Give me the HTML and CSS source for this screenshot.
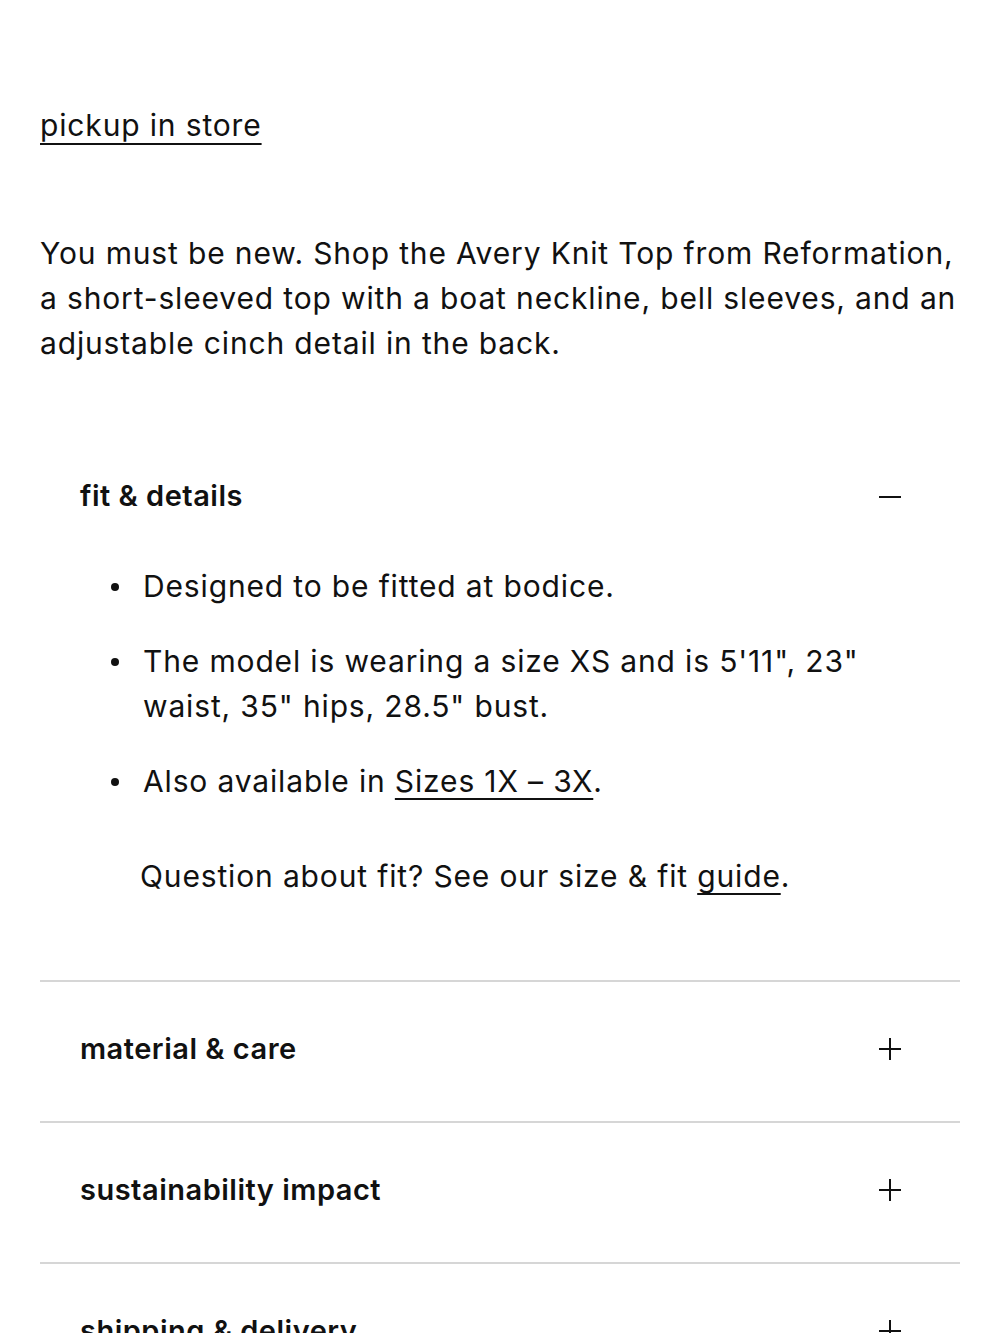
FILE: index.html
```html
<!DOCTYPE html>
<html lang="en">
<head>
<meta charset="utf-8">
<title>Avery Knit Top</title>
<link rel="stylesheet" href="styles.css">
</head>
<body>
<main class="page">
  <a class="pickup" href="#">pickup in store</a>
  <p class="description">You must be new. Shop the Avery Knit Top from Reformation, a short-sleeved top with a boat neckline, bell sleeves, and an adjustable cinch detail in the back.</p>

  <section class="acc acc-open">
    <div class="acc-head">
      <span class="acc-title">fit &amp; details</span>
      <span class="icon icon-minus"></span>
    </div>
    <div class="acc-body">
      <ul class="fit-list">
        <li>Designed to be fitted at bodice.</li>
        <li>The model is wearing a size XS and is 5'11", 23" waist, 35" hips, 28.5" bust.</li>
        <li>Also available in <a href="#" class="link">Sizes 1X – 3X</a>.</li>
      </ul>
      <p class="question">Question about fit? See our size &amp; fit <a href="#" class="link">guide</a>.</p>
    </div>
  </section>

  <section class="acc">
    <div class="acc-head">
      <span class="acc-title">material &amp; care</span>
      <span class="icon icon-plus"></span>
    </div>
  </section>
  <section class="acc">
    <div class="acc-head">
      <span class="acc-title">sustainability impact</span>
      <span class="icon icon-plus"></span>
    </div>
  </section>
  <section class="acc">
    <div class="acc-head">
      <span class="acc-title">shipping &amp; delivery</span>
      <span class="icon icon-plus"></span>
    </div>
  </section>
</main>
</body>
</html>
```
FILE: styles.css
```css
* { box-sizing: border-box; }
html, body { margin: 0; padding: 0; background: #fff; }
body {
  font-family: Inter, "Liberation Sans", Arial, sans-serif;
  color: #111;
  font-size: 30px;
  line-height: 45px;
  letter-spacing: 0.85px;
}
.page {
  padding: 103px 40px 0 40px;
}
.pickup {
  display: inline-block;
  color: #111;
  text-decoration: underline;
  text-decoration-thickness: 2px;
  text-underline-offset: 7px;
}
.description {
  margin: 83px -4px 0 0;
}
.acc {
  border-top: 2px solid #d6d6d6;
}
.acc-open {
  border-top: none;
  margin-top: 63px;
  padding-bottom: 81px;
}
.acc-head {
  display: flex;
  align-items: center;
  justify-content: space-between;
  padding: 44px 59px 50px 40px;
}
.acc-open .acc-head {
  padding-bottom: 0;
}
.acc-title {
  font-weight: 600;
  font-size: 29px;
  letter-spacing: 0.5px;
}
.icon {
  position: relative;
  width: 22px;
  height: 22px;
  display: block;
}
.icon::before,
.icon-plus::after {
  content: "";
  position: absolute;
  background: #111;
}
.icon::before {
  left: 0; right: 0; top: 10px; height: 2px;
}
.icon-minus::before { top: 11px; }
.icon-plus::after {
  top: 0; bottom: 0; left: 10px; width: 2px;
}
.acc-body {
  padding: 46px 40px 0 40px;
}
.fit-list {
  margin: 0;
  padding: 0 0 0 63px;
  list-style: none;
}
.fit-list li {
  position: relative;
  margin-bottom: 30px;
}
.fit-list li::before {
  content: "";
  position: absolute;
  left: -32px;
  top: 19px;
  width: 8px;
  height: 8px;
  border-radius: 50%;
  background: #111;
}
.fit-list li:last-child { margin-bottom: 0; }
.link {
  color: #111;
  text-decoration: underline;
  text-decoration-thickness: 2px;
  text-underline-offset: 6px;
}
.question {
  margin: 50px 0 0 60px;
}
```
